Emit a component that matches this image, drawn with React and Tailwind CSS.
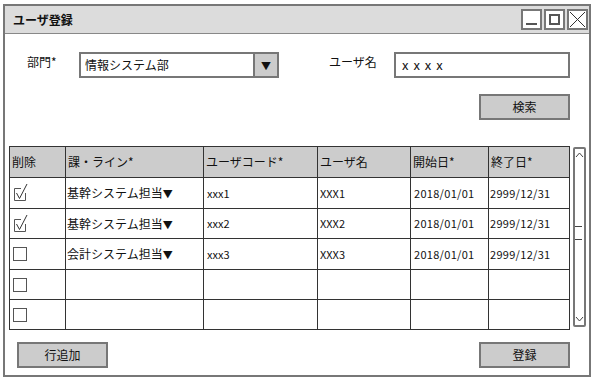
import React from "react";

const font = { fontFamily: '"Noto Sans CJK JP", "Noto Sans", sans-serif' };

const rows = [
  { h: "h-[31px]", checked: true, line: "基幹システム担当", code: "xxx1", name: "XXX1", start: "2018/01/01", end: "2999/12/31" },
  { h: "h-[30px]", checked: true, line: "基幹システム担当", code: "xxx2", name: "XXX2", start: "2018/01/01", end: "2999/12/31" },
  { h: "h-[31px]", checked: false, line: "会計システム担当", code: "xxx3", name: "XXX3", start: "2018/01/01", end: "2999/12/31" },
  { h: "h-[30px]", checked: false, line: "", code: "", name: "", start: "", end: "" },
  { h: "h-[30px]", checked: false, line: "", code: "", name: "", start: "", end: "" },
];

const Checkbox = ({ checked }) =>
  checked ? (
    <svg width="16" height="18" viewBox="0 0 16 18" className="block -mt-[2px]">
      <path d="M8 5.5H1.5V17.5H12.5V10" fill="none" stroke="#555" strokeWidth="1" />
      <path d="M3.5 10L6.5 15.5L14 1" fill="none" stroke="#333" strokeWidth="1" />
    </svg>
  ) : (
    <div className="w-[14px] h-[14px] border border-[#555] bg-white" />
  );

const WinButton = ({ children }) => (
  <div className="w-[21px] h-[21px] border-2 border-[#777] bg-white flex items-center justify-center">
    {children}
  </div>
);

const GrayButton = ({ children, className }) => (
  <div
    className={
      "h-[26px] w-[91px] border-2 border-[#777] bg-[#cccccc] flex items-center justify-center text-[12px] text-[#111] " +
      (className || "")
    }
  >
    {children}
  </div>
);

export default function App() {
  const cols = ["w-[56px]", "w-[138px]", "w-[114px]", "w-[93px]", "w-[78px]", "w-[81px]"];
  return (
    <div className="w-[596px] h-[381px] bg-white pt-[4px] pl-[3px]" style={font}>
      <div className="w-[588px] h-[373px] border-2 border-[#777] flex flex-col">
        {/* title bar */}
        <div className="h-[28px] bg-[#dcdcdc] border-b border-[#888] flex items-center pl-[8px] pr-[1px] shrink-0">
          <span className="text-[12px] font-bold text-[#111]">ユーザ登録</span>
          <div className="ml-auto flex gap-[2px]">
            <WinButton>
              <div className="w-[11px] h-[2px] bg-[#555] mt-[9px]" />
            </WinButton>
            <WinButton>
              <div className="w-[11px] h-[11px] border-2 border-[#555]" />
            </WinButton>
            <WinButton>
              <svg width="17" height="17" viewBox="0 0 17 17">
                <path d="M1 1L16 16M16 1L1 16" stroke="#333" strokeWidth="1" />
              </svg>
            </WinButton>
          </div>
        </div>

        {/* search form */}
        <div className="flex items-center mt-[18px] h-[26px] text-[12px] text-[#111]">
          <span className="ml-[22px] w-[52px] -mt-[6px]">部門*</span>
          <div className="w-[200px] h-[26px] border-2 border-[#777] flex">
            <span className="flex-1 flex items-center pl-[4px]">情報システム部</span>
            <div className="w-[24px] bg-[#cccccc] border-l-2 border-[#777] flex items-center justify-center text-[10px]">
              ▼
            </div>
          </div>
          <span className="ml-[50px] w-[65px] -mt-[6px]">ユーザ名</span>
          <div className="w-[176px] h-[26px] border-2 border-[#777] flex items-center pl-[6px] text-[13px] tracking-[1px]">
            x x x x
          </div>
        </div>
        <div className="flex mt-[16px]">
          <GrayButton className="ml-[474px]">検索</GrayButton>
        </div>

        {/* table + scrollbar */}
        <div className="flex mt-[26px] ml-[4px] items-start">
          <table className="border-collapse border border-[#222] text-[12px] text-[#111] table-fixed">
            <thead>
              <tr className="h-[31px] bg-[#cccccc]">
                {["削除", "課・ライン*", "ユーザコード*", "ユーザ名", "開始日*", "終了日*"].map((h, i) => (
                  <th key={h} className={cols[i] + " border border-[#333] font-normal text-left pl-[2px] p-0"}>
                    {h}
                  </th>
                ))}
              </tr>
            </thead>
            <tbody>
              {rows.map((r, i) => (
                <tr key={i} className={r.h}>
                  <td className="border border-[#333] pl-[3px] p-0">
                    <Checkbox checked={r.checked} />
                  </td>
                  <td className="border border-[#333] pl-[1px] p-0">
                    {r.line}
                    {r.line && <span className="text-[10px]">▼</span>}
                  </td>
                  <td className="border border-[#333] pl-[3px] p-0 text-[11px]">{r.code}</td>
                  <td className="border border-[#333] pl-[2px] p-0 text-[11px]">{r.name}</td>
                  <td className="border border-[#333] pl-[3px] p-0 text-[11px] tracking-[0.3px]">{r.start}</td>
                  <td className="border border-[#333] pl-[1px] p-0 text-[11px] tracking-[0.3px]">{r.end}</td>
                </tr>
              ))}
            </tbody>
          </table>
          <div className="ml-[3px] mt-[1px] w-[13px] h-[180px] border-2 border-[#777] rounded-[2px] flex flex-col items-center py-[3px]">
            <svg width="9" height="6" viewBox="0 0 9 6">
              <path d="M1 5L4.5 1L8 5" fill="none" stroke="#444" strokeWidth="1" />
            </svg>
            <div className="flex-1 w-full flex flex-col justify-center gap-[12px] pb-[8px]">
              <div className="w-[7px] h-px bg-[#444]" />
              <div className="w-[7px] h-px bg-[#444]" />
            </div>
            <svg width="9" height="6" viewBox="0 0 9 6">
              <path d="M1 1L4.5 5L8 1" fill="none" stroke="#444" strokeWidth="1" />
            </svg>
          </div>
        </div>

        {/* bottom buttons */}
        <div className="flex mt-[12px] ml-[12px]">
          <GrayButton>行追加</GrayButton>
          <GrayButton className="ml-[371px]">登録</GrayButton>
        </div>
      </div>
    </div>
  );
}
